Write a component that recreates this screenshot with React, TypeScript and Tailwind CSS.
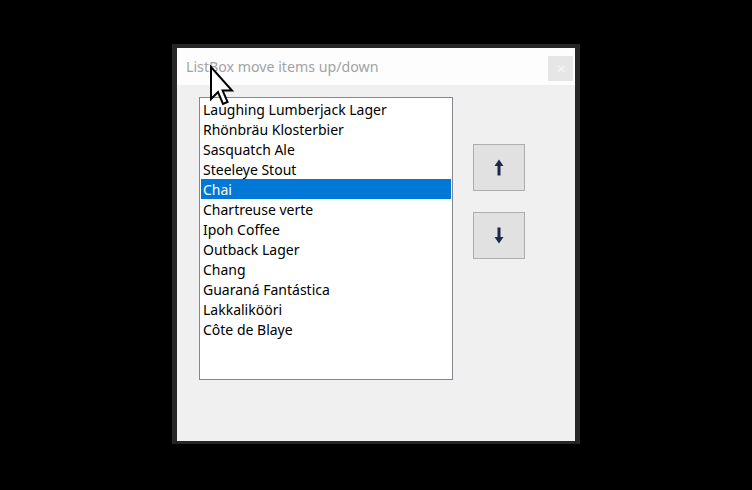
import React from "react";

const items = [
  "Laughing Lumberjack Lager",
  "Rhönbräu Klosterbier",
  "Sasquatch Ale",
  "Steeleye Stout",
  "Chai",
  "Chartreuse verte",
  "Ipoh Coffee",
  "Outback Lager",
  "Chang",
  "Guaraná Fantástica",
  "Lakkalikööri",
  "Côte de Blaye",
];

export default function App() {
  return (
    <div className="relative w-[752px] h-[490px] bg-black flex justify-center pt-[44px]" style={{ fontFamily: '"Noto Sans", "Open Sans", sans-serif' }}>
      <div className="w-[408px] h-[400px] bg-[#262626] pl-[5px] pr-[5px] pt-[4px] pb-[3px]">
        <div className="w-[398px] h-[393px] flex flex-col bg-[#f0f0f0]">
          <div className="h-[37px] bg-[#fdfdfd] flex justify-between items-start">
            <div className="pl-[9px] pt-[9px] text-[14.2px] leading-[20px] text-[#a3a3a3]">ListBox move items up/down</div>
            <div className="mt-[8px] mr-[2px] w-[25px] h-[25px] bg-[#e6e6e6] flex items-center justify-center text-[#f6f6f6] text-[12px] leading-none">✕</div>
          </div>
          <div className="flex pl-[22px] pt-[12px]">
            <div className="w-[254px] h-[283px] bg-white border border-[#828790] p-[1px]">
              {items.map((it) => (
                <div
                  key={it}
                  className={
                    "h-[20px] pl-[2px] pt-[1px] text-[14px] leading-[19px] whitespace-nowrap " +
                    (it === "Chai" ? "bg-[#0078d7] text-white" : "text-black")
                  }
                >
                  {it}
                </div>
              ))}
            </div>
            <div className="flex flex-col ml-[20px] pt-[47px] gap-[21px]">
              <div className="w-[52px] h-[47px] bg-[#e1e1e1] border border-[#adadad] flex items-center justify-center">
                <svg width="10" height="17" viewBox="0 0 10 17">
                  <path d="M5 0.5 L9.5 7 L6.5 7 L6.5 16.5 L3.5 16.5 L3.5 7 L0.5 7 Z" fill="#1b2a4a" />
                </svg>
              </div>
              <div className="w-[52px] h-[47px] bg-[#e1e1e1] border border-[#adadad] flex items-center justify-center">
                <svg width="10" height="17" viewBox="0 0 10 17">
                  <path d="M5 16.5 L9.5 10 L6.5 10 L6.5 0.5 L3.5 0.5 L3.5 10 L0.5 10 Z" fill="#1b2a4a" />
                </svg>
              </div>
            </div>
          </div>
        </div>
      </div>
      <svg className="absolute left-[209px] top-[65px]" width="28" height="42" viewBox="0 0 14 21">
        <path d="M1 1 L1 17 L4.5 13.5 L7 19.5 L9.3 18.5 L6.8 12.8 L11.5 12.8 Z" fill="white" stroke="black" strokeWidth="1" strokeLinejoin="miter" />
      </svg>
    </div>
  );
}
